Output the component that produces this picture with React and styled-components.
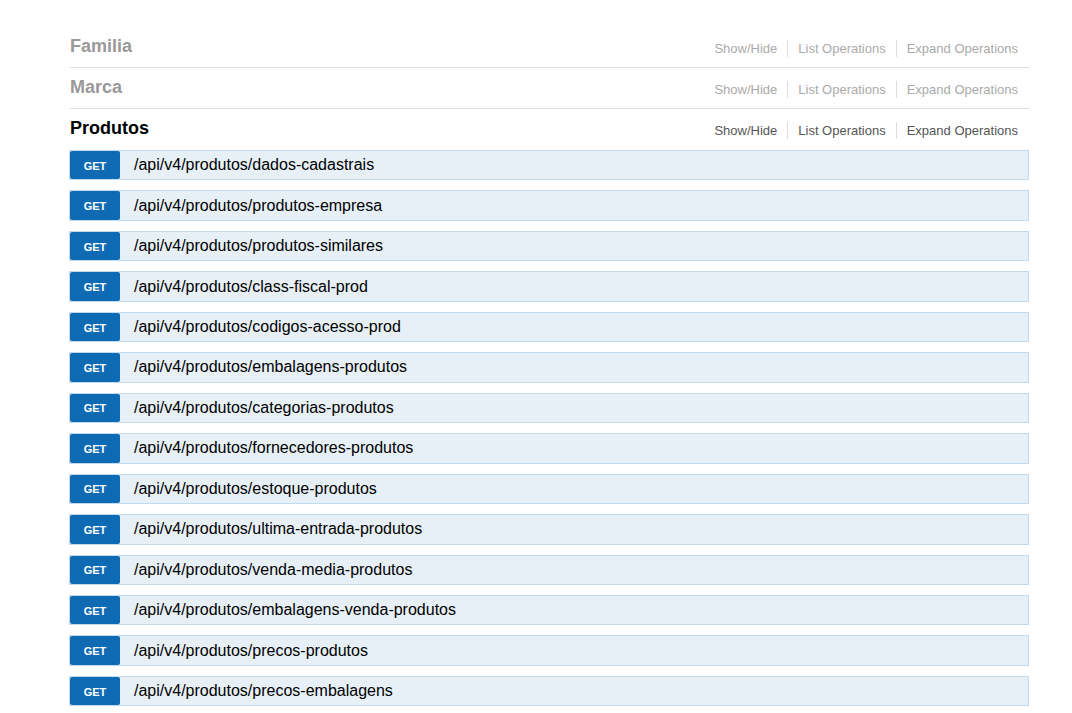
import styled, { createGlobalStyle } from 'styled-components';

const GlobalStyle = createGlobalStyle`
  body {
    margin: 0;
    background: #fff;
    font-family: "Liberation Sans", Arial, sans-serif;
  }
`;

const Page = styled.div`
  padding: 27px 43px 0 70px;
  width: 959px;
`;

const Resource = styled.section``;

const Heading = styled.div`
  display: flex;
  align-items: center;
  justify-content: space-between;
  height: 40px;
  border-bottom: ${p => (p.$active ? '0' : '1px solid #ddd')};
  margin-bottom: ${p => (p.$active ? '1px' : '0')};
`;

const Title = styled.h2`
  margin: 0;
  padding-bottom: 1px;
  font-size: 18px;
  font-weight: bold;
  color: ${p => (p.$active ? '#000' : '#999')};
`;

const Options = styled.ul`
  display: flex;
  align-items: center;
  list-style: none;
  margin: 0;
  padding: 3px 11px 0 0;
`;

const Option = styled.li`
  font-size: 13px;
  line-height: 17px;
  padding: 0 10px;
  border-left: 1px solid #ddd;
  color: ${p => (p.$active ? '#555' : '#aaa')};

  &:first-child {
    border-left: 0;
    padding-left: 0;
  }
  &:last-child {
    padding-right: 0;
  }
`;

const Operations = styled.ul`
  list-style: none;
  margin: 0 0 0 -1px;
  padding: 0;
`;

const Operation = styled.li`
  display: flex;
  align-items: center;
  height: 30.46px;
  box-sizing: border-box;
  margin-bottom: 10px;
  background: #e7f0f7;
  border: 1px solid #c3d9ec;
`;

const Method = styled.span`
  display: flex;
  align-items: center;
  justify-content: center;
  width: 50px;
  align-self: stretch;
  background: #0f6ab4;
  color: #fff;
  border-radius: 2px;
  font-size: 11px;
  font-weight: bold;
  padding-top: 1px;
  box-sizing: border-box;
`;

const Path = styled.span`
  padding-left: 14px;
  font-size: 16px;
  color: #000;
`;

const paths = [
  'dados-cadastrais',
  'produtos-empresa',
  'produtos-similares',
  'class-fiscal-prod',
  'codigos-acesso-prod',
  'embalagens-produtos',
  'categorias-produtos',
  'fornecedores-produtos',
  'estoque-produtos',
  'ultima-entrada-produtos',
  'venda-media-produtos',
  'embalagens-venda-produtos',
  'precos-produtos',
  'precos-embalagens',
];

const ResourceHeading = ({ name, active }) => (
  <Heading $active={active}>
    <Title $active={active}>{name}</Title>
    <Options>
      <Option $active={active}>Show/Hide</Option>
      <Option $active={active}>List Operations</Option>
      <Option $active={active}>Expand Operations</Option>
    </Options>
  </Heading>
);

export default function App() {
  return (
    <>
      <GlobalStyle />
      <Page>
        <Resource>
          <ResourceHeading name="Familia" />
        </Resource>
        <Resource>
          <ResourceHeading name="Marca" />
        </Resource>
        <Resource>
          <ResourceHeading name="Produtos" active />
          <Operations>
            {paths.map(p => (
              <Operation key={p}>
                <Method>GET</Method>
                <Path>/api/v4/produtos/{p}</Path>
              </Operation>
            ))}
          </Operations>
        </Resource>
      </Page>
    </>
  );
}
